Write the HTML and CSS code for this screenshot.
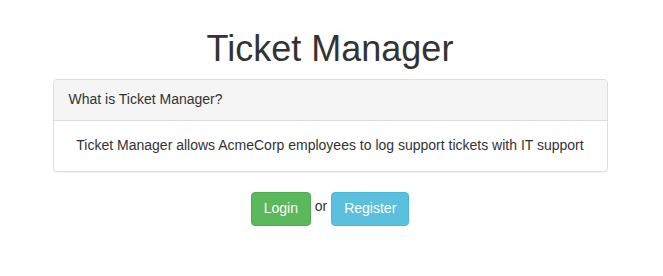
FILE: index.html
```html
<!DOCTYPE html>
<html lang="en">
<head>
    <meta charset="UTF-8">
    <meta name="viewport" content="width=device-width, initial-scale=1.0">
    <title>Ticket Manager</title>
    <link rel="stylesheet" href="styles.css">
</head>
<body>
    <!-- MAIN CONTAINER -->
    <div class="container">
        <h1 class="title">Ticket Manager</h1>

        <!-- INFO PANEL -->
        <div class="panel">
            <div class="panel-heading">What is Ticket Manager?</div>
            <div class="panel-body">
                Ticket Manager allows AcmeCorp employees to log support tickets with IT support
            </div>
        </div>

        <!-- AUTH BUTTONS -->
        <div class="actions">
            <a href="#" class="btn btn-success">Login</a> or <a href="#" class="btn btn-info">Register</a>
        </div>
    </div>
</body>
</html>
```

FILE: styles.css
```css
/* General Styles */
body {
    margin: 0;
    font-family: "Liberation Sans", Arial, sans-serif;
    font-size: 14px;
    line-height: 1.42857;
    color: #333;
    background: #fff;
}

.container {
    padding: 9px 17px 0 14px;
}

/* Header */
.title {
    font-size: 36px;
    font-weight: 500;
    line-height: 1.1;
    margin: 20px 0 10px;
    text-align: center;
}

/* Panel */
.panel {
    width: 553px;
    margin: 0 auto 20px;
    border: 1px solid #ddd;
    border-radius: 4px;
    box-shadow: 0 1px 1px rgba(0, 0, 0, 0.05);
    background: #fff;
}

.panel-heading {
    padding: 10px 15px;
    background: #f5f5f5;
    border-bottom: 1px solid #ddd;
    border-radius: 3px 3px 0 0;
}

.panel-body {
    padding: 15px;
    text-align: center;
}

/* Buttons */
.actions {
    text-align: center;
}

.btn {
    display: inline-block;
    padding: 6px 12px;
    font-size: 14px;
    line-height: 1.42857;
    border: 1px solid transparent;
    border-radius: 4px;
    color: #fff;
    text-decoration: none;
    vertical-align: -2px;
}

.btn-success {
    background: #5cb85c;
    border-color: #4cae4c;
}

.btn-info {
    background: #5bc0de;
    border-color: #46b8da;
}
```
